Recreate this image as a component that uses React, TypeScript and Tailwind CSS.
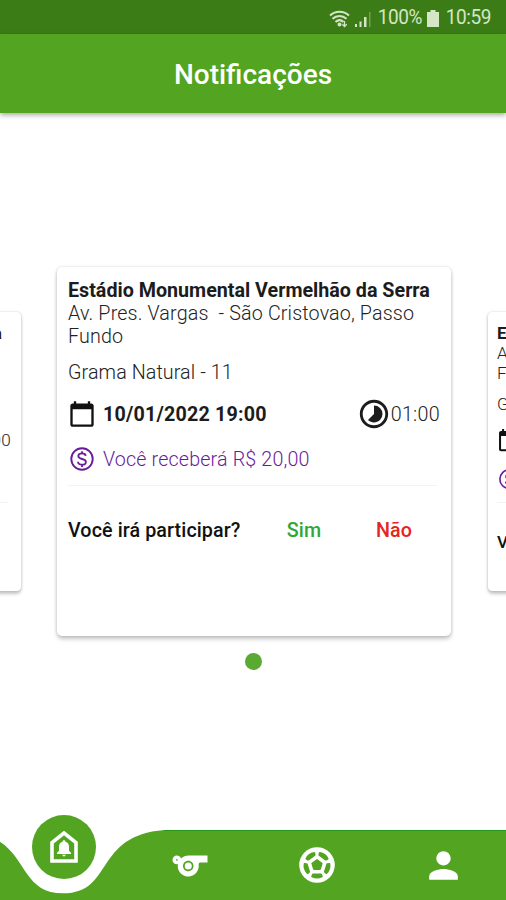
import { MdCalendarToday, MdPerson, MdSports, MdTimelapse } from "react-icons/md";

function StatusBar() {
  return (
    <div className="flex h-[34px] shrink-0 items-center justify-end bg-[#3c7c16] pt-[3px] pr-[15px] text-[19px] text-[#d4e6c6]">
      <svg className="mr-1 h-[18px] w-[22px]" viewBox="0 0 22 18" fill="none" stroke="currentColor" strokeWidth="2">
        <path d="M1 5.5c5.5-5 13.500-5 19 0" />
        <path d="M3.500 8.800c4-3.700 10-3.700 14 0" />
        <path d="M6.500 12c2.500-2.300 5.700-2.300 8 0" />
        <path d="M15.500 11v5.500M13.300 14.300l2.200 2.200 2.200-2.200" strokeWidth="1.300" />
        <circle cx="10.500" cy="14.500" r="1" />
      </svg>
      <svg className="mr-[7px] h-4 w-4" viewBox="0 0 16 16" fill="currentColor">
        <path d="M0 13h2v3H0zM4.500 10.500h2V16h-2zM9 6h2.500v10H9z" />
        <path d="M14 1h1.500v15H14z" opacity=".35" />
      </svg>
      <span className="w-[44px] scale-y-105 whitespace-nowrap tracking-[-0.4px]">100%</span>
      <svg className="ml-[5px] mr-[7px] h-[17px] w-3" viewBox="0 0 12 17" fill="currentColor">
        <path d="M3.500 0h5v2H12v15H0V2h3.500z" />
      </svg>
      <span className="scale-y-105 tracking-[-0.4px]">10:59</span>
    </div>
  );
}

function MoneyIcon() {
  return (
    <svg className="size-7" viewBox="0 0 28 28" fill="none" stroke="currentColor">
      <circle cx="14" cy="14" r="10.700" strokeWidth="1.900" />
      <path d="M17.700 10.900c-.2-1.600-1.600-2.500-3.700-2.500-2.200 0-3.700 1-3.700 2.700 0 4 7.600 1.800 7.600 5.800 0 1.700-1.600 2.800-3.900 2.800-2.400 0-3.900-1.100-4-2.900M14 6.200v2.200M14 19.700v2.200" strokeWidth="1.800" />
    </svg>
  );
}

function GameCard({ className }: { className: string }) {
  return (
    <div
      className={`w-[394px] shrink-0 rounded-[5px] bg-white px-[11px] pt-3 text-[19.700px] leading-[23px] font-light text-[#222] shadow-[0_3px_4px_rgba(0,0,0,0.22),0_0_3px_rgba(0,0,0,0.15)] ${className}`}
    >
      <div className="whitespace-nowrap font-bold text-[#1c1c1c]">Estádio Monumental Vermelhão da Serra</div>
      <div className="whitespace-pre-wrap tracking-[0.15px]">{"Av. Pres. Vargas  - São Cristovao, Passo Fundo"}</div>
      <div className="mt-[13px] tracking-[0.1px]">Grama Natural - 11</div>
      <div className="mt-[13px] flex h-[34px] items-center">
        <MdCalendarToday className="size-7 text-[#111]" />
        <span className="ml-[7px] font-bold tracking-[0.2px] text-[#1c1c1c]">10/01/2022 19:00</span>
        <MdTimelapse className="ml-auto size-[34px] text-[#1c1c1c]" />
        <span className="tracking-[0.3px]">01:00</span>
      </div>
      <div className="mt-[14px] flex h-7 items-center text-[#6a1b9a]">
        <MoneyIcon />
        <span className="ml-[7px] tracking-[0.15px]">Você receberá R$ 20,00</span>
      </div>
      <div className="mr-[3px] mt-3 border-t border-[#f3f3f3]" />
      <div className="mt-[33px] flex items-center font-medium tracking-[0.1px] text-[#111]">
        <span className="w-[190px]">Você irá participar?</span>
        <button className="w-[92px] text-center text-[#2fa836]">Sim</button>
        <button className="w-[88px] text-center text-[#e52521]">Não</button>
      </div>
    </div>
  );
}

function HomeBell() {
  return (
    <svg className="h-8 w-7" viewBox="0 0 28 32">
      <path d="M2 30V11.500L14 2l12 9.500V30z" fill="none" stroke="white" strokeWidth="3.600" />
      <path d="M14 9.300c1 0 1.500.6 1.500 1.500 2.400.7 3.500 2.500 3.500 5v4l2 2v1.200H7v-1.200l2-2v-4c0-2.500 1.100-4.300 3.500-5 0-.9.500-1.500 1.500-1.500zM12.300 23.700h3.400c0 2.300-3.400 2.300-3.400 0z" fill="white" />
    </svg>
  );
}

function SoccerBall() {
  return (
    <svg className="size-9" viewBox="-18 -18 36 36">
      <circle r="17.800" fill="white" />
      <path d="M0-5.500L5.200-1.700 3.300 4.500H-3.300L-5.200-1.700z" fill="#52a421" stroke="#52a421" strokeWidth="1" strokeLinejoin="round" />
      {[0, 72, 144, 216, 288].map((angle) => (
        <path
          key={angle}
          d="M-4 9.600H4L4.800 11.400Q0 13.800-4.800 11.400z"
          transform={`rotate(${angle})`}
          fill="#52a421"
          stroke="#52a421"
          strokeWidth="2"
          strokeLinejoin="round"
        />
      ))}
    </svg>
  );
}

function BottomNav() {
  return (
    <nav className="relative h-[70px] shrink-0 text-white">
      <svg className="absolute inset-0 h-[70px] w-[506px]" viewBox="0 0 506 70">
        <path d="M-38 0C33 5.300 12.700 63.300 63.300 63.300S93.600 5.300 164.500 0H506V70H-38z" fill="#52a421" />
        <path d="M164 .5H506" stroke="#279719" />
      </svg>
      <div className="relative grid h-full grid-cols-4 items-center justify-items-center pl-px">
        <div className="-mt-[36px] flex size-16 items-center justify-center rounded-full bg-[#52a421]">
          <HomeBell />
        </div>
        <MdSports className="mt-0.5 size-[42px]" />
        <SoccerBall />
        <MdPerson className="ml-0.5 size-[43px]" />
      </div>
    </nav>
  );
}

export default function App() {
  return (
    <div className="flex h-[900px] w-[506px] flex-col overflow-hidden bg-white font-['Roboto',sans-serif]">
      <StatusBar />
      <header className="z-10 flex h-[79px] shrink-0 items-center justify-center bg-[#52a421] pt-[3px] text-[28px] font-medium text-white shadow-[0_2px_5px_rgba(0,0,0,0.35)]">
        Notificações
      </header>
      <main className="flex min-h-0 flex-1 flex-col items-center pt-[154px]">
        <div className="flex h-[369px] w-full shrink-0 items-center justify-center gap-[36.500px] pl-0.5">
          <GameCard className="h-[320px] [zoom:0.87]" />
          <GameCard className="h-[369px]" />
          <GameCard className="h-[320px] [zoom:0.87]" />
        </div>
        <div className="ml-px mt-[17px] size-[17px] shrink-0 rounded-full bg-[#59aa30]" />
      </main>
      <BottomNav />
    </div>
  );
}
